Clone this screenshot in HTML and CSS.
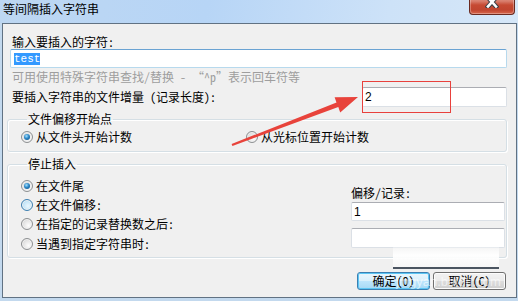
FILE: index.html
```html
<!DOCTYPE html>
<html lang="zh-CN">
	<head>
		<meta charset="UTF-8">
		<title>等间隔插入字符串</title>
		<link rel="stylesheet" href="styles.css">
	</head>
	<body>
		<div class="window">
			<div class="titlebar">
				<span class="title">等间隔插入字符串</span>
				<span class="close">
					<svg width="14" height="12" viewBox="0 0 14 12">
						<path d="M3 1.5 L11 10.5 M11 1.5 L3 10.5" stroke="#3a3f46" stroke-width="4.6" stroke-linecap="square"/>
						<path d="M3 1.5 L11 10.5 M11 1.5 L3 10.5" stroke="#ffffff" stroke-width="2.6" stroke-linecap="square"/>
					</svg>
				</span>
			</div>
			<div class="client">
				<div class="label first">输入要插入的字符:</div>
				<div class="textbox focus wide"><span class="sel">test</span></div>
				<div class="hint">可用使用特殊字符串查找/替换 - <span class="q">“</span>^p<span class="q">”</span>表示回车符等</div>
				<div class="row">
					<span class="label">要插入字符串的文件增量 (记录长度):</span>
					<div class="textbox num count">2</div>
				</div>
				<fieldset class="group g1">
					<legend>文件偏移开始点</legend>
					<div class="line">
						<label class="opt head"><span class="radio on"></span>从文件头开始计数</label>
						<label class="opt"><span class="radio"></span>从光标位置开始计数</label>
					</div>
				</fieldset>
				<fieldset class="group g2">
					<legend>停止插入</legend>
					<div class="stop">
						<div class="opts">
							<label class="opt"><span class="radio on"></span>在文件尾</label>
							<label class="opt"><span class="radio hot"></span>在文件偏移:</label>
							<label class="opt"><span class="radio"></span>在指定的记录替换数之后:</label>
							<label class="opt"><span class="radio"></span>当遇到指定字符串时:</label>
						</div>
						<div class="side">
							<div class="label">偏移/记录:</div>
							<div class="textbox num">1</div>
							<div class="textbox num tall"></div>
						</div>
					</div>
				</fieldset>
				<div class="buttons">
					<button class="btn def">确定(O)</button>
					<button class="btn">取消(C)</button>
				</div>
			</div>

			<div class="mark"></div>
			<svg class="arrow" width="518" height="301" viewBox="0 0 518 301">
				<polygon points="232.4,146 338.3,107.1 340.2,112.4 358,97 334.6,97.3 336.5,102.5 231.6,144" fill="#e8433b"/>
			</svg>
			<div class="wm">
				<div class="wm-glow"></div>
				<div class="wm-bar"></div>
				<div class="wm-text">jingyan.baidu.com</div>
			</div>
		</div>
	</body>
</html>
```

FILE: styles.css
```css
*{
	margin: 0;
	padding: 0;
	box-sizing: border-box;
}
body{
	width: 518px;
	height: 301px;
	overflow: hidden;
	font: 12px/14px "Noto Sans Mono CJK SC", "Noto Sans CJK SC", "Liberation Sans", sans-serif;
	color: #000;
}
.window{
	position: relative;
	width: 518px;
	height: 301px;
	background: #c3d9ee;
	display: flex;
	flex-direction: column;
}
.titlebar{
	height: 23px;
	background: linear-gradient(100deg, #bdd7f2 0%, #b7d5f6 40%, #cde2f8 75%, #d6e7f8 100%);
	display: flex;
	justify-content: space-between;
	padding: 0 3px 0 3px;
}
.title{
	padding-top: 2px;
}
.close{
	width: 46px;
	height: 21px;
	margin-top: -6px;
	border: 1px solid #6a2a20;
	border-top: none;
	border-radius: 0 0 4px 4px;
	background: linear-gradient(#e39a8a 0%, #d9806f 35%, #c64a33 55%, #c04530 80%, #d8684d 100%);
	box-shadow: inset 0 0 0 1px rgba(255,255,255,0.3);
	display: flex;
	justify-content: center;
}
.close svg{
	margin-top: 2px;
}
.client{
	height: 275px;
	margin: 0 1px 0 2px;
	border: 1px solid #617283;
	background: #f0f0f0;
	display: flex;
	flex-direction: column;
}
.label.first{
	padding: 11px 0 0 9px;
}
.textbox{
	height: 19px;
	background: #fff;
	border: 1px solid #dbe0e6;
	border-top-color: #abadb3;
	border-radius: 2px;
	padding: 0 2px;
	display: flex;
	align-items: center;
}
.textbox.focus{
	border-color: #b7d9ed;
	border-top-color: #6aa3d3;
	padding: 0 3px;
}
.textbox.wide{
	margin: 0 9px 0 7px;
}
.sel{
	font: 11px/12px "Liberation Mono", monospace;
	background: #3399ff;
	color: #fff;
}
.num{
	font: 12px/14px "Liberation Sans", sans-serif;
}
.hint{
	margin: 2px 0 0 9px;
	color: #9e9e9e;
}
.q{
	font-family: "Noto Sans CJK SC", sans-serif;
	font-feature-settings: "fwid" 1;
}
.row{
	margin: 3px 9px 0 9px;
	height: 20px;
	display: flex;
	align-items: center;
	justify-content: space-between;
}
.textbox.count{
	width: 145px;
	height: 20px;
}
.group{
	margin: 5px 9px 0 4px;
	border: 1px solid #d5dfe5;
	border-radius: 3px;
	box-shadow: inset 1px 1px 0 #fff, 1px 1px 0 #fff;
}
.group legend{
	margin-left: 6px;
	padding: 0 1px;
	line-height: 14px;
}
.g1{
	padding: 1px 0 5px 13px;
}
.line{
	display: flex;
}
.opt{
	height: 19px;
	display: flex;
	align-items: center;
}
.opt.head{
	width: 225px;
}
.radio{
	position: relative;
	width: 12px;
	height: 12px;
	margin-right: 3px;
	border-radius: 50%;
	border: 1px solid #8d9092;
	background: radial-gradient(circle at 65% 65%, #fdfdfd 0, #e6e6e6 50%, #cdcdcd 100%);
	box-shadow: inset 0 0 0 1px #f2f2f2;
	flex: none;
}
.radio.on::after{
	content: "";
	position: absolute;
	left: 2px;
	top: 2px;
	width: 6px;
	height: 6px;
	border-radius: 50%;
	background: radial-gradient(circle at 40% 35%, #a6e2ff 0, #2b86c6 45%, #0d4778 100%);
}
.radio.hot{
	border-color: #3c7fb1;
	background: radial-gradient(circle at 60% 60%, #eaf7fe 0, #bde2f7 65%, #9fd0ee 100%);
}
.g2{
	padding: 5px 1px 3px 13px;
}
.stop{
	display: flex;
	justify-content: space-between;
}
.opts .opt{
	height: 19.4px;
}
.side{
	width: 154px;
}
.side .label{
	margin-top: 10px;
}
.side .textbox{
	margin-top: 2px;
}
.side .tall{
	height: 20px;
	margin-top: 7px;
}
.buttons{
	margin-top: 14px;
	padding-right: 10px;
	display: flex;
	justify-content: flex-end;
	gap: 3px;
}
.btn{
	width: 73px;
	height: 18px;
	border: 1px solid #707070;
	border-radius: 3px;
	background: linear-gradient(#f2f2f2 0, #ebebeb 50%, #dddddd 50%, #cfcfcf 100%);
	box-shadow: inset 0 0 0 1px #fcfcfc;
	font: 12px/14px "Noto Sans Mono CJK SC", "Noto Sans CJK SC", "Liberation Sans", sans-serif;
	color: #000;
}
.btn.def{
	border-color: #3c7fb1;
	background: linear-gradient(#eaf6fd 0, #d9f0fc 50%, #bee6fd 50%, #a7d9f5 100%);
	box-shadow: inset 0 0 0 1px #5cc6f4;
}
.mark{
	position: absolute;
	left: 362px;
	top: 81px;
	width: 89px;
	height: 32px;
	border: 1px solid #e8413d;
}
.arrow{
	position: absolute;
	left: 0;
	top: 0;
}
.wm{
	position: absolute;
	left: 393px;
	top: 247px;
	width: 106px;
}
.wm-glow{
	height: 20px;
	background: linear-gradient(rgba(255,255,255,0.3), rgba(255,255,255,0.95) 40%, rgba(248,248,248,0.9));
}
.wm-bar{
	height: 2px;
	background: #4b5561;
}
.wm-text{
	margin: 6px 0 0 3px;
	font: 13px/14px "Liberation Sans", sans-serif;
	color: rgba(255,255,255,0.6);
}
```
